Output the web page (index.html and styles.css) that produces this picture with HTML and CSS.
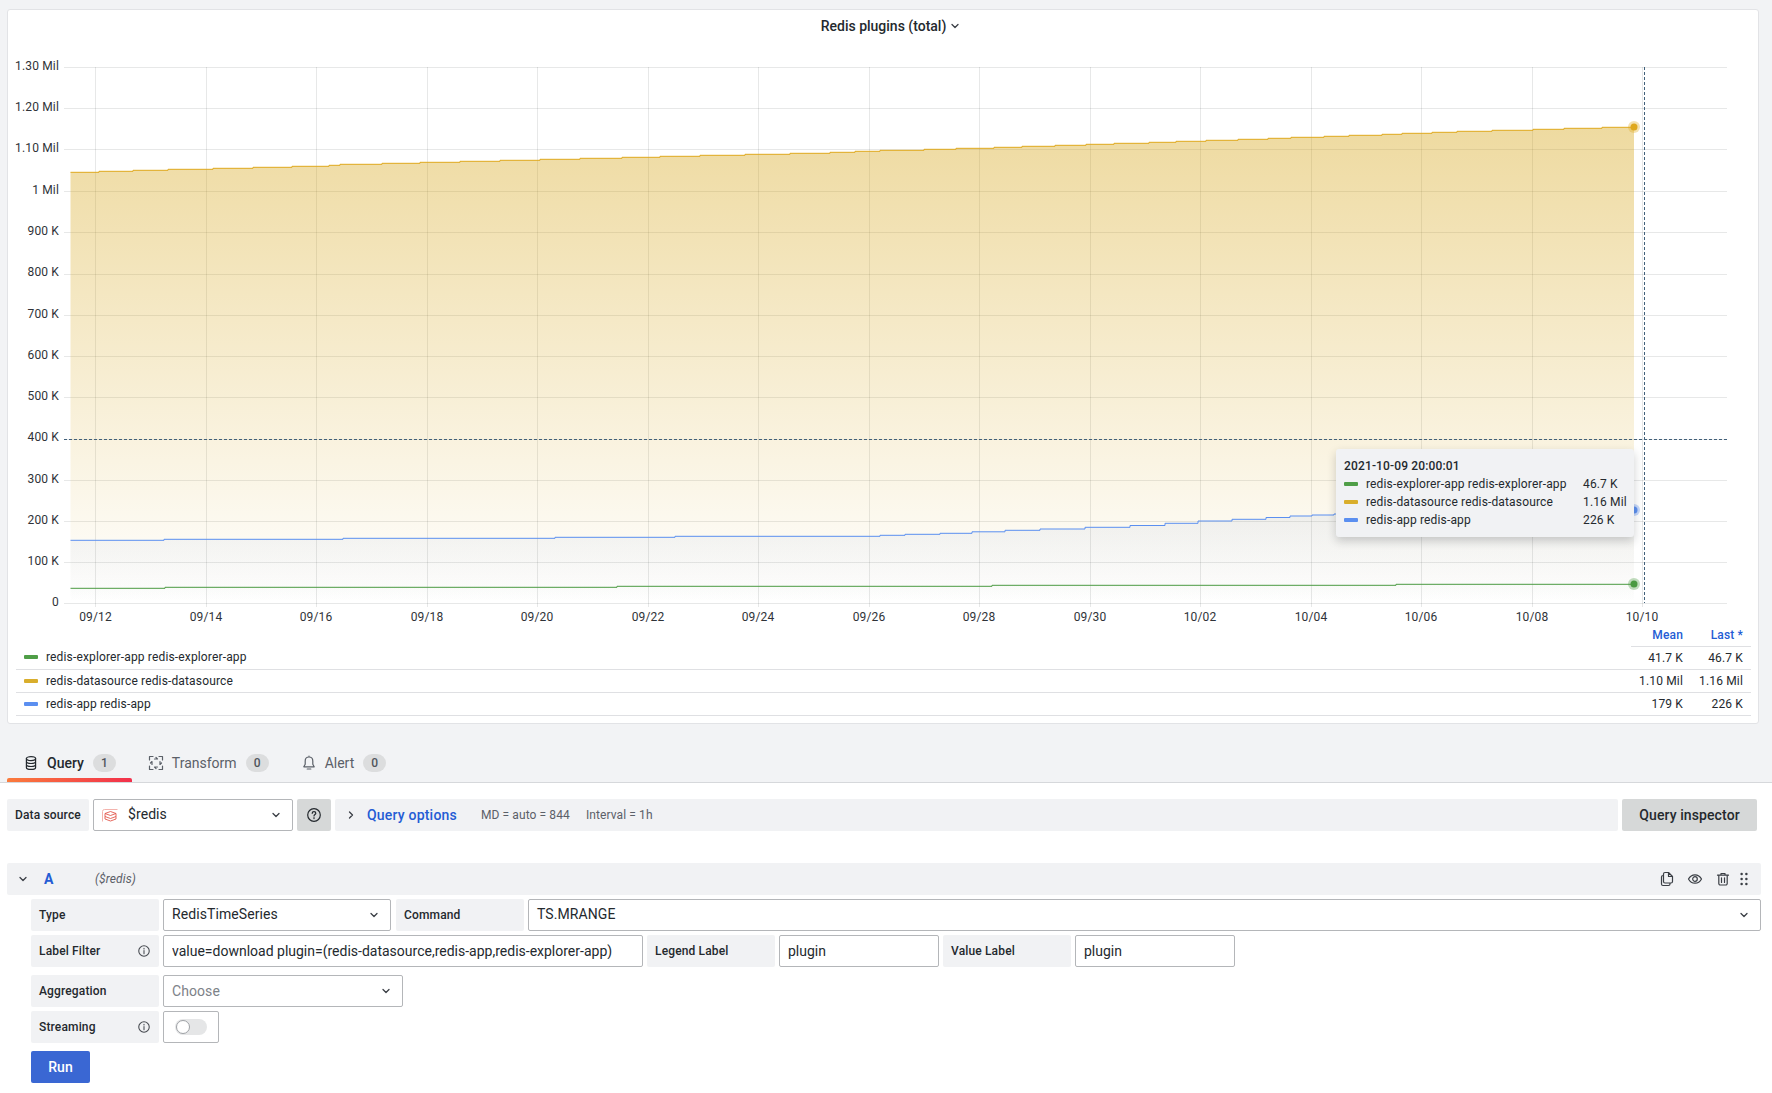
FILE: index.html
```html
<!DOCTYPE html>
<html lang="en">
<head>
<meta charset="utf-8">
<title>Redis plugins (total)</title>
<link rel="stylesheet" href="styles.css">
</head>
<body>
<div class="top">
  <section class="panel">
    <header class="panel-title">
      <span>Redis plugins (total)</span>
      <svg class="chev-s" viewBox="0 0 12 12"><path d="M3 4.500l3 3 3-3"/></svg>
    </header>
    <svg class="chart" viewBox="8 40 1750 586" width="1750" height="586">
      <defs>
        <linearGradient id="gy" gradientUnits="userSpaceOnUse" x1="0" y1="67" x2="0" y2="603"><stop offset="0" stop-color="#d29c00" stop-opacity=".42"/><stop offset="1" stop-color="#d29c00" stop-opacity="0"/></linearGradient>
        <linearGradient id="gb" gradientUnits="userSpaceOnUse" x1="0" y1="67" x2="0" y2="603"><stop offset="0" stop-color="#3f6fd0" stop-opacity=".42"/><stop offset="1" stop-color="#3f6fd0" stop-opacity="0"/></linearGradient>
        <linearGradient id="gg" gradientUnits="userSpaceOnUse" x1="0" y1="67" x2="0" y2="603"><stop offset="0" stop-color="#3d8a35" stop-opacity=".42"/><stop offset="1" stop-color="#3d8a35" stop-opacity="0"/></linearGradient>
      </defs>
      <path class="grid" d="M64 67.5H1727M64 108.5H1727M64 149.5H1727M64 191.5H1727M64 232.5H1727M64 274.5H1727M64 315.5H1727M64 356.5H1727M64 397.5H1727M64 439.5H1727M64 480.5H1727M64 521.5H1727M64 562.5H1727M64 603.5H1727"/>
      <path class="grid" d="M95.5 67V607M206.5 67V607M316.5 67V607M427.5 67V607M537.5 67V607M648.5 67V607M758.5 67V607M869.5 67V607M979.5 67V607M1090.5 67V607M1200.5 67V607M1311.5 67V607M1421.5 67V607M1532.5 67V607M1642.5 67V607"/>

      <path fill="url(#gy)" d="M70.500 603V172.300H99V171.300H133V170.300H168V169.300H213V168.300H253V167.300H292V166.300H329V165.300H340V164.300H382V163.300H420V162.300H460V161.300H500V160.300H540V159.300H580V158.300H622V157.300H660V156.300H700V155.300H745V154.300H790V153.300H830V152.300H855V151.300H880V150.300H924V149.300H956V148.300H994V147.300H1022V146.300H1055V145.300H1086V144.300H1114V143.300H1149V142.300H1176V141.300H1206V140.300H1238V139.300H1268V138.300H1291V137.300H1324V136.300H1349V135.300H1382V134.300H1402V133.300H1432V132.300H1457V131.300H1492V130.300H1533V129.300H1564V128.300H1602V127.300H1634V603Z"/>
      <path fill="url(#gb)" d="M70.500 603V540.300H164V539.300H343V538.300H555V537.300H675V536.300H880V535.300H905V534.300H940V533.300H972V531.800H1005V530.300H1040V529H1085V527.300H1130V525.500H1165V523.300H1198V521H1232V519.300H1266V517.500H1290V516H1312V515H1334V514H1400V513H1500V512H1580V511H1634V603Z"/>
      <path fill="url(#gg)" d="M70.500 603V588.300H165V587.300H617V586.300H992V585.300H1396V584.300H1634V603Z"/>

      <path class="line ly" d="M70.500 172.300H99V171.300H133V170.300H168V169.300H213V168.300H253V167.300H292V166.300H329V165.300H340V164.300H382V163.300H420V162.300H460V161.300H500V160.300H540V159.300H580V158.300H622V157.300H660V156.300H700V155.300H745V154.300H790V153.300H830V152.300H855V151.300H880V150.300H924V149.300H956V148.300H994V147.300H1022V146.300H1055V145.300H1086V144.300H1114V143.300H1149V142.300H1176V141.300H1206V140.300H1238V139.300H1268V138.300H1291V137.300H1324V136.300H1349V135.300H1382V134.300H1402V133.300H1432V132.300H1457V131.300H1492V130.300H1533V129.300H1564V128.300H1602V127.300H1634"/>
      <path class="line lb" d="M70.500 540.300H164V539.300H343V538.300H555V537.300H675V536.300H880V535.300H905V534.300H940V533.300H972V531.800H1005V530.300H1040V529H1085V527.300H1130V525.500H1165V523.300H1198V521H1232V519.300H1266V517.500H1290V516H1312V515H1334V514H1400V513H1500V512H1580V511H1634"/>
      <path class="line lg" d="M70.500 588.300H165V587.300H617V586.300H992V585.300H1396V584.300H1634"/>

      <path class="cross" d="M64 439.5H1727M1644.5 67V603"/>

      <circle class="halo-y" cx="1634" cy="127" r="6"/><circle class="dot-y" cx="1634" cy="127" r="3.500"/>
      <circle class="halo-b" cx="1634" cy="510" r="6"/><circle class="dot-b" cx="1634" cy="510" r="3.500"/>
      <circle class="halo-g" cx="1634" cy="584" r="6"/><circle class="dot-g" cx="1634" cy="584" r="3.500"/>

      <g class="axis-y">
        <text x="59" y="69.500">1.30 Mil</text><text x="59" y="110.500">1.20 Mil</text><text x="59" y="151.500">1.10 Mil</text><text x="59" y="193.500">1 Mil</text><text x="59" y="234.500">900 K</text><text x="59" y="276">800 K</text><text x="59" y="317.500">700 K</text><text x="59" y="358.500">600 K</text><text x="59" y="399.500">500 K</text><text x="59" y="441">400 K</text><text x="59" y="482.500">300 K</text><text x="59" y="523.500">200 K</text><text x="59" y="564.500">100 K</text><text x="59" y="606">0</text>
      </g>
      <g class="axis-x">
        <text x="95.5" y="621">09/12</text><text x="206" y="621">09/14</text><text x="316" y="621">09/16</text><text x="427" y="621">09/18</text><text x="537" y="621">09/20</text><text x="648" y="621">09/22</text><text x="758" y="621">09/24</text><text x="869" y="621">09/26</text><text x="979" y="621">09/28</text><text x="1090" y="621">09/30</text><text x="1200" y="621">10/02</text><text x="1311" y="621">10/04</text><text x="1421" y="621">10/06</text><text x="1532" y="621">10/08</text><text x="1642" y="621">10/10</text>
      </g>
    </svg>

    <div class="tooltip">
      <div class="tt-time">2021-10-09 20:00:01</div>
      <div class="tt-row"><i class="swatch sw-g"></i><span>redis-explorer-app redis-explorer-app</span><span class="tt-val">46.7 K</span></div>
      <div class="tt-row"><i class="swatch sw-y"></i><span>redis-datasource redis-datasource</span><span class="tt-val">1.16 Mil</span></div>
      <div class="tt-row"><i class="swatch sw-b"></i><span>redis-app redis-app</span><span class="tt-val">226 K</span></div>
    </div>

    <table class="legend">
      <thead><tr><th class="lg-name"></th><th class="lg-num">Mean</th><th class="lg-num">Last *</th></tr></thead>
      <tbody>
        <tr><td class="lg-name"><i class="swatch sw-g"></i>redis-explorer-app redis-explorer-app</td><td class="lg-num">41.7 K</td><td class="lg-num">46.7 K</td></tr>
        <tr><td class="lg-name"><i class="swatch sw-y"></i>redis-datasource redis-datasource</td><td class="lg-num">1.10 Mil</td><td class="lg-num">1.16 Mil</td></tr>
        <tr><td class="lg-name"><i class="swatch sw-b"></i>redis-app redis-app</td><td class="lg-num">179 K</td><td class="lg-num">226 K</td></tr>
      </tbody>
    </table>
  </section>

  <nav class="tabs">
    <div class="tab tab-active">
      <svg class="ico dark" viewBox="0 0 16 16"><ellipse cx="8" cy="3.600" rx="4.600" ry="2"/><path d="M3.400 3.600v8.800c0 1.100 2 2 4.600 2s4.600-.9 4.600-2V3.600M3.400 6.500c0 1.100 2 2 4.600 2s4.600-.9 4.600-2M3.400 9.500c0 1.100 2 2 4.600 2s4.600-.9 4.600-2"/></svg>
      <span>Query</span><b class="badge">1</b>
    </div>
    <div class="tab">
      <svg class="ico" viewBox="0 0 16 16"><path d="M1.500 5V1.500H5M11 1.500h3.500V5M14.500 11v3.500H11M5 14.500H1.500V11"/><path d="M6.500 4h3l-1.500-1.500M12 6.500v3l1.500-1.500M9.500 12h-3l1.500 1.500M4 9.500v-3L2.500 8"/></svg>
      <span>Transform</span><b class="badge">0</b>
    </div>
    <div class="tab">
      <svg class="ico" viewBox="0 0 16 16"><path d="M8 2c-2.500 0-3.800 1.800-3.800 4v3.300L2.800 11.800h10.400L11.800 9.300V6C11.800 3.800 10.500 2 8 2zM8 1v1M6.200 14h3.600"/></svg>
      <span>Alert</span><b class="badge">0</b>
    </div>
  </nav>
</div>

<main class="editor">
  <div class="ds-row">
    <label class="field-label ds-label">Data source</label>
    <div class="select ds-select">
      <svg class="redis" viewBox="0 0 16 13"><path class="redis-box" d="M.5 12.500V2.500a2 2 0 0 1 2-2h13"/><path class="redis-stack" d="M3 4.500L8.500 2.500 14 4.500 8.500 6.500zM3 7.500l5.500 2 5.500-2M3 10l5.500 2 5.500-2M3 4.500V10M14 4.500V10"/></svg>
      <span class="sel-val">$redis</span>
      <svg class="chev" viewBox="0 0 12 12"><path d="M3 4.500l3 3 3-3"/></svg>
    </div>
    <button class="help-btn"><svg class="ico dark" viewBox="0 0 16 16"><circle cx="8" cy="8" r="6.300"/><path d="M6.200 6.300c0-1 .8-1.600 1.800-1.600s1.800.6 1.800 1.500c0 1.300-1.800 1.300-1.800 2.700M8 10.700v.9"/></svg></button>
    <div class="options-bar">
      <svg class="chev-r" viewBox="0 0 12 12"><path d="M4.500 3l3 3-3 3"/></svg>
      <span class="opt-title">Query options</span>
      <span class="opt-info">MD = auto = 844</span>
      <span class="opt-info">Interval = 1h</span>
    </div>
    <button class="inspector">Query inspector</button>
  </div>

  <div class="q-head">
    <svg class="chev q-chev" viewBox="0 0 12 12"><path d="M3 4.500l3 3 3-3"/></svg>
    <span class="q-letter">A</span>
    <em class="q-ds">($redis)</em>
    <div class="q-actions">
      <svg class="ico act" viewBox="0 0 16 16"><path d="M6 1.500h3.500L13.500 5.500v5a1.500 1.500 0 0 1-1.500 1.500H6a1.500 1.500 0 0 1-1.500-1.500V3A1.500 1.500 0 0 1 6 1.500zM9.500 1.500V5.500H13.500M4.500 4.500H4a1.500 1.500 0 0 0-1.500 1.500v7A1.500 1.500 0 0 0 4 14.500h5.500a1.500 1.500 0 0 0 1.500-1.500V12"/></svg>
      <svg class="ico act" viewBox="0 0 16 16"><path d="M1.500 8c1.500-2.800 3.800-4.200 6.500-4.200s5 1.400 6.500 4.200c-1.500 2.800-3.800 4.200-6.500 4.200S3 10.800 1.500 8z"/><circle cx="8" cy="8" r="2.300"/></svg>
      <svg class="ico act" viewBox="0 0 16 16"><path d="M2.500 4.200h11M6 4V2.500h4V4M3.800 4.200v8.300a1.500 1.500 0 0 0 1.500 1.500h5.400a1.500 1.500 0 0 0 1.500-1.500V4.200M6.500 6.800v4.700M9.500 6.800v4.700"/></svg>
      <svg class="grip" viewBox="0 0 10 16"><circle cx="2.600" cy="3" r="1.250"/><circle cx="7.400" cy="3" r="1.250"/><circle cx="2.600" cy="8" r="1.250"/><circle cx="7.400" cy="8" r="1.250"/><circle cx="2.600" cy="13" r="1.250"/><circle cx="7.400" cy="13" r="1.250"/></svg>
    </div>
  </div>

  <div class="form">
    <div class="form-row">
      <label class="field-label lbl">Type</label>
      <div class="select sel-type"><span class="sel-val">RedisTimeSeries</span><svg class="chev" viewBox="0 0 12 12"><path d="M3 4.500l3 3 3-3"/></svg></div>
      <label class="field-label lbl">Command</label>
      <div class="select sel-cmd"><span class="sel-val">TS.MRANGE</span><svg class="chev" viewBox="0 0 12 12"><path d="M3 4.500l3 3 3-3"/></svg></div>
    </div>
    <div class="form-row">
      <label class="field-label lbl">Label Filter<svg class="info" viewBox="0 0 16 16"><circle cx="8" cy="8" r="6"/><path d="M8 7.500v3.500M8 4.800v1"/></svg></label>
      <input class="input in-filter" value="value=download plugin=(redis-datasource,redis-app,redis-explorer-app)">
      <label class="field-label lbl">Legend Label</label>
      <input class="input in-small" value="plugin">
      <label class="field-label lbl">Value Label</label>
      <input class="input in-small" value="plugin">
    </div>
    <div class="form-row row-gap">
      <label class="field-label lbl">Aggregation</label>
      <div class="select sel-agg"><span class="sel-val placeholder">Choose</span><svg class="chev" viewBox="0 0 12 12"><path d="M3 4.500l3 3 3-3"/></svg></div>
    </div>
    <div class="form-row">
      <label class="field-label lbl">Streaming<svg class="info" viewBox="0 0 16 16"><circle cx="8" cy="8" r="6"/><path d="M8 7.500v3.500M8 4.800v1"/></svg></label>
      <div class="switch-box"><span class="switch"><span class="knob"></span></span></div>
    </div>
    <button class="run">Run</button>
  </div>
</main>
</body>
</html>
```
FILE: styles.css
```css
* { box-sizing: border-box; }
html, body { margin: 0; padding: 0; }
body {
  width: 1772px;
  height: 1093px;
  overflow: hidden;
  background: #fff;
  color: #24292e;
  font-family: Roboto, "Liberation Sans", sans-serif;
  font-size: 14px;
}
svg { display: block; flex: none; }

.top {
  height: 783px;
  padding: 9px 13px 0 7px;
  background: #f2f3f5;
  border-bottom: 1px solid #d6d8db;
}

.panel {
  position: relative;
  height: 715px;
  background: #fff;
  border: 1px solid #e2e3e6;
  border-radius: 3px;
}
.panel-title {
  height: 30px;
  padding: 2px 0 0 16px;
  display: flex;
  align-items: center;
  justify-content: center;
  gap: 3px;
  font-weight: 500;
  font-size: 14px;
}
.chev-s { width: 12px; height: 12px; }
.chev-s path, .chev path, .chev-r path {
  fill: none;
  stroke: #3b3f45;
  stroke-width: 1.300;
  stroke-linecap: round;
  stroke-linejoin: round;
}

.grid { stroke: rgba(36, 41, 46, .11); stroke-width: 1; fill: none; }
.line { fill: none; stroke-width: 1; }
.ly { stroke: #dfa81c; }
.lb { stroke: #5b8ff0; }
.lg { stroke: #4a9a41; }
.cross { fill: none; stroke: #41607a; stroke-width: 1; stroke-dasharray: 3 2; }
.halo-y { fill: #dfa81c; opacity: .35; }
.dot-y { fill: #dfa81c; }
.halo-b { fill: #5b8ff0; opacity: .35; }
.dot-b { fill: #5b8ff0; }
.halo-g { fill: #4a9a41; opacity: .35; }
.dot-g { fill: #4a9a41; }
.axis-y text, .axis-x text {
  font-size: 12px;
  letter-spacing: .15px;
  fill: #2f3338;
  font-family: Roboto, "Liberation Sans", sans-serif;
}
.axis-y text { text-anchor: end; }
.axis-x text { text-anchor: middle; }

.tooltip {
  position: absolute;
  left: 1328px;
  top: 439px;
  width: 298px;
  height: 88px;
  padding: 8px;
  background: #f1f2f4;
  border-radius: 3px;
  box-shadow: 0 4px 10px rgba(36, 41, 46, .22);
  font-size: 12px;
  letter-spacing: .15px;
}
.tt-time { height: 18px; line-height: 18px; font-weight: 500; }
.tt-row { height: 18px; display: flex; align-items: center; line-height: 18px; }
.tt-row .swatch { margin-right: 8px; }
.tt-val { position: absolute; left: 247px; }

.swatch {
  display: inline-block;
  flex: none;
  width: 14px;
  height: 4px;
  border-radius: 1px;
}
.sw-g { background: #4f9e47; }
.sw-y { background: #d9ae2c; }
.sw-b { background: #5b8ff0; }

.legend {
  width: 1735px;
  margin-left: 8px;
  border-collapse: collapse;
  font-size: 12px;
  letter-spacing: .15px;
}
.legend th { height: 20px; padding: 0 0 2px; font-weight: 500; color: #245cd4; }
.legend thead .lg-num { border-bottom: 1px solid #dfe0e3; }
.legend td {
  height: 23px;
  padding: 0;
  border-bottom: 1px solid #dfe0e3;
}
.lg-name { text-align: left; padding-left: 8px !important; }
.lg-name .swatch { margin-right: 8px; vertical-align: 2px; }
.lg-num { width: 60px; text-align: right; padding-right: 8px !important; }

.tabs { display: flex; margin-top: 22px; height: 36px; }
.tab {
  position: relative;
  display: flex;
  align-items: center;
  gap: 8px;
  padding: 0 16px 2px;
  color: #5b6068;
}
.tab-active { color: #24292e; font-weight: 500; }
.tab-active::after {
  content: "";
  position: absolute;
  left: 0;
  right: 0;
  bottom: 0;
  height: 4px;
  border-radius: 2px 2px 0 0;
  background: linear-gradient(90deg, #fa7b3c, #f2304b);
}
.badge {
  width: 23px;
  height: 18px;
  margin-left: 1px;
  border-radius: 9px;
  background: #dcddde;
  color: #50555c;
  font-size: 12px;
  font-weight: 500;
  line-height: 18px;
  text-align: center;
}
.ico { width: 16px; height: 16px; fill: none; stroke: #5b6068; stroke-width: 1.200; stroke-linecap: round; stroke-linejoin: round; }
.ico.dark { stroke: #24292e; }

.editor { padding: 16px 11px 0 7px; }
.ds-row {
  display: flex;
  gap: 4px;
  height: 32px;
  margin-right: 4px;
  margin-bottom: 32px;
}
.field-label {
  display: flex;
  align-items: center;
  justify-content: space-between;
  height: 32px;
  padding: 0 8px;
  background: #f1f2f4;
  border-radius: 2px;
  font-size: 12px;
  font-weight: 500;
  letter-spacing: .15px;
  flex: none;
}
.ds-label { width: 82px; }
.select {
  display: flex;
  align-items: center;
  height: 32px;
  padding: 0 10px 0 8px;
  background: #fff;
  border: 1px solid #b4b6b9;
  border-radius: 2px;
  flex: none;
}
.sel-val { flex: 1; padding-bottom: 2px; font-size: 14px; letter-spacing: .08px; }
.placeholder { color: #7d8288; padding-bottom: 0; }
.chev { width: 12px; height: 12px; }
.ds-select { width: 200px; }
.redis { width: 16px; height: 13px; margin-right: 10px; }
.redis-box { fill: none; stroke: #f3b3ad; stroke-width: 1; }
.redis-stack { fill: none; stroke: #e2574c; stroke-width: .9; }
.help-btn {
  width: 34px;
  height: 32px;
  padding: 0;
  display: flex;
  align-items: center;
  justify-content: center;
  border: 0;
  border-radius: 2px;
  background: #d6d8d8;
}
.options-bar {
  flex: 1;
  display: flex;
  align-items: center;
  padding-left: 10px;
  background: #f1f2f4;
  border-radius: 2px;
}
.chev-r { width: 12px; height: 12px; margin-right: 10px; }
.opt-title { color: #245cd4; font-weight: 500; margin-right: 24px; letter-spacing: .2px; }
.opt-info { color: #5b6068; font-size: 12px; margin-right: 16px; letter-spacing: .1px; }
.inspector {
  width: 135px;
  height: 32px;
  padding: 0;
  border: 0;
  border-radius: 2px;
  background: #d6d8d8;
  color: #24292e;
  font: 500 14px Roboto, "Liberation Sans", sans-serif;
  letter-spacing: .1px;
}

.q-head {
  display: flex;
  align-items: center;
  height: 32px;
  padding-left: 10px;
  background: #f1f2f4;
  border-radius: 2px;
}
.q-chev { margin-right: 15px; }
.q-letter { width: 51px; color: #245cd4; font-weight: 700; font-size: 14px; }
.q-ds { color: #5b6068; font-size: 12px; letter-spacing: .12px; }
.q-actions { margin-left: auto; display: flex; align-items: center; gap: 12px; padding-right: 12px; }
.act { stroke: #3b3f45; }
.grip { width: 10px; height: 16px; margin-left: -4px; fill: #3b3f45; }

.form { padding-left: 24px; padding-top: 4px; }
.form-row { display: flex; gap: 4px; margin-bottom: 4px; }
.row-gap { margin-top: 8px; }
.lbl { width: 128px; }
.info { width: 14px; height: 14px; fill: none; stroke: #44484e; stroke-width: 1.200; stroke-linecap: round; }
.sel-type { width: 228px; margin-right: 1px; }
.sel-cmd { flex: 1; }
.sel-agg { width: 240px; }
.input {
  height: 32px;
  padding: 0 8px;
  border: 1px solid #b4b6b9;
  border-radius: 2px;
  background: #fff;
  color: #24292e;
  font: 400 14px Roboto, "Liberation Sans", sans-serif;
  outline: none;
  flex: none;
}
.in-filter { width: 480px; }
.in-small { width: 160px; }
.switch-box {
  display: flex;
  align-items: center;
  justify-content: center;
  width: 56px;
  height: 32px;
  border: 1px solid #b4b6b9;
  border-radius: 2px;
}
.switch {
  position: relative;
  display: block;
  width: 32px;
  height: 16px;
  border-radius: 8px;
  background: #e5e6e7;
}
.knob {
  position: absolute;
  left: 1px;
  top: 1px;
  width: 14px;
  height: 14px;
  border-radius: 50%;
  background: #fff;
  border: 1px solid #9ea1a5;
}
.run {
  display: block;
  width: 59px;
  height: 32px;
  margin-top: 8px;
  padding: 0;
  border: 0;
  border-radius: 2px;
  background: #3a67d3;
  color: #fff;
  font: 500 14px Roboto, "Liberation Sans", sans-serif;
}
```
